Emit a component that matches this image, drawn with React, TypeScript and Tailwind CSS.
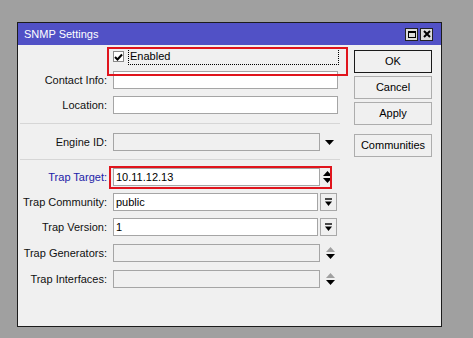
import React from 'react';

// SNMP Settings dialog (WinBox style)

const font = { fontFamily: '"Liberation Sans", Arial, sans-serif' };

const DownTri = ({ color = '#000' }: { color?: string }) => (
  <svg width="9" height="5" viewBox="0 0 9 5"><path d="M0 0h9L4.5 5z" fill={color} /></svg>
);
const UpTri = ({ color = '#000' }: { color?: string }) => (
  <svg width="9" height="5" viewBox="0 0 9 5"><path d="M0 5h9L4.5 0z" fill={color} /></svg>
);

const UpDown = ({ up = '#000' }: { up?: string }) => (
  <div className="flex flex-col items-center gap-[2px] ml-[4px] w-[10px]">
    <UpTri color={up} />
    <DownTri />
  </div>
);

const DropBtn = () => (
  <div className="ml-[2px] w-[17px] h-[18px] border border-[#a8a8a8] bg-[#f0f0f0] flex items-center justify-center">
    <svg width="9" height="9" viewBox="0 0 9 9">
      <path d="M1 1h7" stroke="#000" strokeWidth="1.4" />
      <path d="M1 3.5h7L4.5 8z" fill="#000" />
    </svg>
  </div>
);

const Row = ({ label, blue, mt, children }: { label: string; blue?: boolean; mt: string; children: React.ReactNode }) => (
  <div className={`flex items-center h-[18px] ${mt}`}>
    <span className={`w-[89px] text-right text-[11px] leading-none whitespace-nowrap ${blue ? 'text-[#2222a8]' : 'text-[#111]'}`}>{label}</span>
    <div className="ml-[6px] flex items-center">{children}</div>
  </div>
);

const Input = ({ w, value, disabled }: { w: string; value?: string; disabled?: boolean }) => (
  <div className={`${w} h-[18px] border border-[#a5a5a5] ${disabled ? 'bg-[#f0f0f0]' : 'bg-white'} flex items-center px-[2px] text-[11px] text-black`}>
    {value}
  </div>
);

const Sep = ({ mt }: { mt: string }) => <div className={`${mt} ml-[2px] w-[320px] h-px bg-[#d6d6d6]`} />;

const Btn = ({ label, mt, def }: { label: string; mt: string; def?: boolean }) => (
  <div className={`${mt} w-[78px] h-[23px] flex items-center justify-center text-[11px] text-black bg-[#f0f0f0] border ${def ? 'border-[#1a1a1a]' : 'border-[#adadad]'}`}>
    {label}
  </div>
);

export default function App() {
  return (
    <div className="w-[473px] h-[338px] bg-[#a0a0a0] pl-[17px] pt-[22px]" style={font}>
      <div className="relative w-[425px] h-[305px] border border-[#1c1c1c] bg-[#f0f0f0] flex flex-col">
        {/* title bar */}
        <div className="h-[22px] bg-[#5151c6] flex items-center pl-[6px] pr-[8px]">
          <span className="text-[11px] text-white">SNMP Settings</span>
          <div className="ml-auto flex gap-[2px]">
            <div className="w-[13px] h-[13px] bg-[#dcdcdc] border border-[#222] flex items-center justify-center">
              <div className="w-[8px] h-[7px] border border-black border-t-2" />
            </div>
            <div className="w-[13px] h-[13px] bg-[#dcdcdc] border border-[#222] flex items-center justify-center">
              <svg width="8" height="8" viewBox="0 0 8 8"><path d="M1 1l6 6M7 1l-6 6" stroke="#000" strokeWidth="2" /></svg>
            </div>
          </div>
        </div>

        {/* body */}
        <div className="flex">
          <div className="w-[336px] flex flex-col">
            <div className="flex items-center h-[17px] mt-[3px] pl-[95px]">
              <div className="w-[11px] h-[11px] bg-white border border-[#8a8a8a] flex items-center justify-center">
                <svg width="9" height="8" viewBox="0 0 9 8"><path d="M1 4l2.5 2.5L8 1.5" stroke="#000" strokeWidth="2" fill="none" /></svg>
              </div>
              <div className="ml-[4px] w-[211px] h-[17px] border border-dotted border-black flex items-center pl-[1px] text-[11px] text-black">
                Enabled
              </div>
            </div>
            <Row label="Contact Info:" mt="mt-[6px]"><Input w="w-[225px]" /></Row>
            <Row label="Location:" mt="mt-[7px]"><Input w="w-[225px]" /></Row>
            <Sep mt="mt-[9px]" />
            <Row label="Engine ID:" mt="mt-[9px]">
              <Input w="w-[207px]" disabled />
              <div className="ml-[5px]"><DownTri /></div>
            </Row>
            <Sep mt="mt-[8px]" />
            <Row label="Trap Target:" blue mt="mt-[8px]">
              <Input w="w-[207px]" value="10.11.12.13" />
              <div className="-ml-[2px]"><UpDown /></div>
            </Row>
            <Row label="Trap Community:" mt="mt-[7px]">
              <Input w="w-[205px]" value="public" />
              <DropBtn />
            </Row>
            <Row label="Trap Version:" mt="mt-[7px]">
              <Input w="w-[205px]" value="1" />
              <DropBtn />
            </Row>
            <Row label="Trap Generators:" mt="mt-[8px]">
              <Input w="w-[207px]" disabled />
              <div className="ml-[1px]"><UpDown up="#a0a0a0" /></div>
            </Row>
            <Row label="Trap Interfaces:" mt="mt-[8px]">
              <Input w="w-[207px]" disabled />
              <div className="ml-[1px]"><UpDown up="#a0a0a0" /></div>
            </Row>
          </div>
          <div className="flex flex-col">
            <Btn label="OK" mt="mt-[5px]" def />
            <Btn label="Cancel" mt="mt-[3px]" />
            <Btn label="Apply" mt="mt-[3px]" />
            <Btn label="Communities" mt="mt-[9px]" />
          </div>
        </div>

        {/* red annotation boxes */}
        <div className="absolute left-[89px] top-[24px] w-[241px] h-[29px] border-2 border-[#e0141c] pointer-events-none" />
        <div className="absolute left-[91px] top-[143px] w-[223px] h-[23px] border-2 border-[#e0141c] pointer-events-none" />
      </div>
    </div>
  );
}
